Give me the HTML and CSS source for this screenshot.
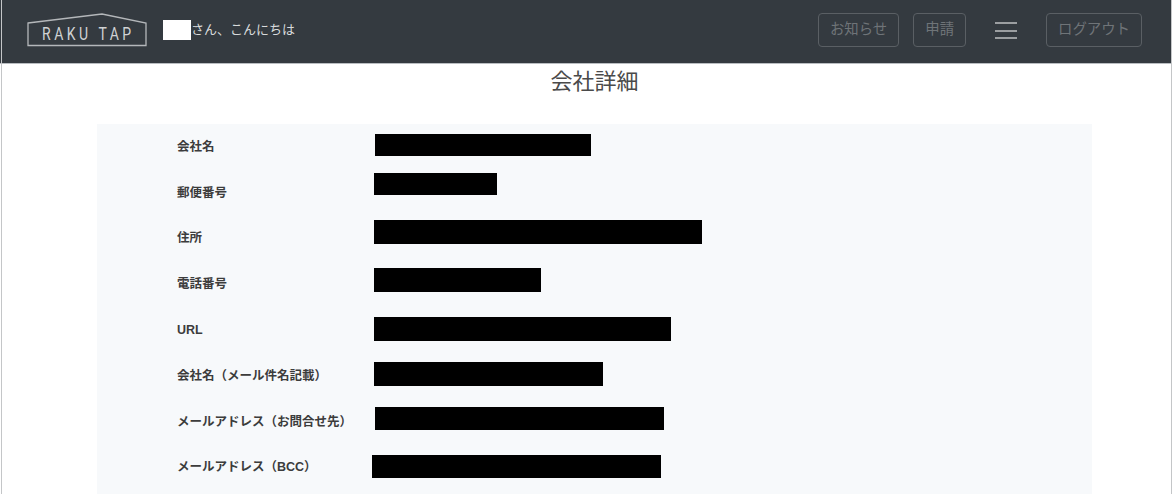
FILE: index.html
```html
<!DOCTYPE html>
<html lang="ja">
<head>
<meta charset="utf-8">
<title>会社詳細</title>
<link rel="stylesheet" href="styles.css">
</head>
<body>
<div class="frame">
  <header class="topbar">
    <div class="brand">
      <svg class="logo" width="120" height="34" viewBox="0 0 120 34" aria-label="RAKU TAP">
        <path class="logo-line" d="M1 10 L75 1 L119 10 V32.500 H1 Z"/>
        <text class="logo-text" transform="translate(15 26.500) scale(.8 1)">RAKU TAP</text>
      </svg>
      <div class="greeting"><span class="name-mask"></span><span>さん、こんにちは</span></div>
    </div>
    <nav class="actions">
      <a class="btn">お知らせ</a>
      <a class="btn btn-apply">申請</a>
      <span class="burger"><i></i><i></i><i></i></span>
      <a class="btn">ログアウト</a>
    </nav>
  </header>
  <main class="content">
    <h1 class="title">会社詳細</h1>
    <section class="panel">
      <div class="row"><div class="label">会社名</div><div class="bar b1"></div></div>
      <div class="row"><div class="label">郵便番号</div><div class="bar b2"></div></div>
      <div class="row"><div class="label">住所</div><div class="bar b3"></div></div>
      <div class="row"><div class="label">電話番号</div><div class="bar b4"></div></div>
      <div class="row"><div class="label">URL</div><div class="bar b5"></div></div>
      <div class="row"><div class="label">会社名（メール件名記載）</div><div class="bar b6"></div></div>
      <div class="row"><div class="label">メールアドレス（お問合せ先）</div><div class="bar b7"></div></div>
      <div class="row"><div class="label">メールアドレス（BCC）</div><div class="bar b8"></div></div>
    </section>
  </main>
</div>
</body>
</html>
```
FILE: styles.css
```css
* { box-sizing: border-box; }
html, body { margin: 0; height: 100%; overflow: hidden; background: #fff; }
body { font-family: "Liberation Sans", "Noto Sans CJK JP", sans-serif; color: #212529; }
.frame { position: relative; height: 494px; }
.frame::after {
  content: ""; position: absolute; top: 0; bottom: 0; left: 1px; right: 0;
  border-left: 1px solid #c4c6c8; border-right: 1px solid #c4c6c8; pointer-events: none;
}
.topbar {
  height: 64px; background: #343a40; border-bottom: 1px solid #b9bdc1;
  display: flex; align-items: center; justify-content: space-between;
  padding: 0 30px 0 27px;
}
.brand { display: flex; align-items: center; gap: 16px; margin-top: -3px; }
.logo { display: block; overflow: visible; }
.logo-line { fill: none; stroke: #b4b7ba; stroke-width: 1.3; }
.logo-text { font-family: Roboto, sans-serif; font-size: 17.5px; letter-spacing: 4.4px; fill: #d0d2d4; }
.greeting { display: flex; align-items: center; font-size: 13px; line-height: 20px; color: #d8dadc; margin-top: -1px; }
.name-mask { width: 28px; height: 20px; background: #fff; }
.actions { display: flex; align-items: center; margin-top: -3px; }
.btn {
  display: block; height: 34px; line-height: 31px; padding: 0 11px; font-size: 14.4px;
  color: #6f7478; border: 1px solid #5a5f64; border-radius: 4px;
}
.btn-apply { margin-left: 14px; }
.burger { display: flex; flex-direction: column; gap: 5.5px; width: 22px; margin: 0 29px; padding-top: 1px; }
.burger i { display: block; height: 2px; background: #9b9ea1; }
.content { padding: 0 80px 0 97px; }
.title { margin: 0; height: 60px; padding-top: 2px; font-size: 22px; line-height: 32px; font-weight: 400; text-align: center; color: #4a4a4a; }
.panel { background: #f7f9fb; height: 370px; padding: 0 0 0 80px; }
.row { height: 45.8px; display: flex; align-items: center; }
.label { width: 197px; font-size: 12.5px; line-height: 18px; font-weight: 700; color: #3c3c3c; flex: none; }
.bar { background: #000; }
.b1 { width: 216px; height: 22px; margin: -4px 0 0 1px; }
.b2 { width: 123px; height: 22px; margin-top: -18px; }
.b3 { width: 328px; height: 24px; margin-top: -12px; }
.b4 { width: 167px; height: 24px; margin-top: -8px; }
.b5 { width: 297px; height: 24px; margin-top: -2px; }
.b6 { width: 229px; height: 24px; margin-top: -4px; }
.b7 { width: 289px; height: 23px; margin: -6px 0 0 1px; }
.b8 { width: 289px; height: 23px; margin: -2px 0 0 -2px; }
```
